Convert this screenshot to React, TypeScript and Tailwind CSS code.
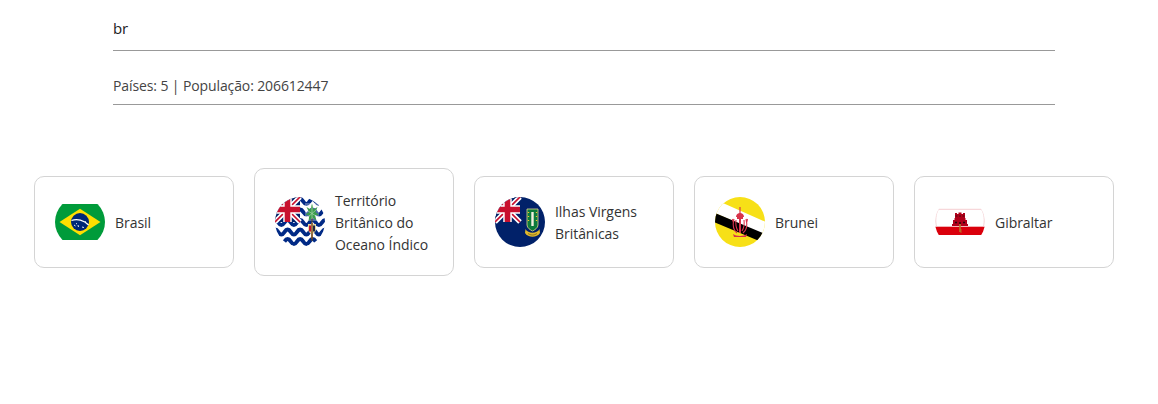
import React from "react";

function UnionJack() {
  return (
    <g>
      <rect x="0" y="0" width="25" height="25" fill="#012169" />
      <path d="M0 0L25 25M25 0L0 25" stroke="#fff" strokeWidth="5" />
      <path d="M0 0L25 25M25 0L0 25" stroke="#c8102e" strokeWidth="1.7" />
      <path d="M12.5 0V25M0 12.5H25" stroke="#fff" strokeWidth="8.5" />
      <path d="M12.5 0V25M0 12.5H25" stroke="#c8102e" strokeWidth="5.6" />
    </g>
  );
}

function Flag({ id, children }: { id: string; children: React.ReactNode }) {
  return (
    <svg width="50" height="50" viewBox="0 0 50 50" className="shrink-0 block">
      <defs>
        <clipPath id={id}>
          <circle cx="25" cy="25" r="25" />
        </clipPath>
      </defs>
      <g clipPath={`url(#${id})`}>{children}</g>
    </svg>
  );
}

const Brazil = () => (
  <Flag id="br">
    <rect x="0" y="7" width="50" height="36" fill="#009b3a" />
    <path d="M25 11.7L45.5 25L25 38.3L4.5 25Z" fill="#fedf00" />
    <circle cx="25" cy="25" r="9" fill="#002776" />
    <path d="M16.5 23.5C22 21.5 29 23 33.6 28" stroke="#fff" strokeWidth="1.3" fill="none" />
    <path d="M19 28l1.5 1M23 28l.5 2M27 30l2 .5M30 24.5l1 .5M21 26.5l1 .3" stroke="#dfe6f2" strokeWidth="1" />
  </Flag>
);

const wave = (y: number) => {
  let d = `M-3 ${y}`;
  for (let x = -3; x < 52; x += 12.5) {
    d += ` Q${x + 3.1} ${y - 5} ${x + 6.25} ${y} T${x + 12.5} ${y}`;
  }
  return d;
};

const Biot = () => (
  <Flag id="io">
    <rect width="50" height="50" fill="#fff" />
    {[4.5, 15, 25.5, 35, 44.5].map((y) => (
      <path key={y} d={wave(y)} stroke="#012a86" strokeWidth="4" fill="none" />
    ))}
    <UnionJack />
    <rect x="30" y="6" width="14" height="18" fill="#fff" opacity="0.3" />
    <path d="M37 14V44" stroke="#6b4a1e" strokeWidth="1" />
    <path d="M37 6.500L38.500 12.500L42.500 10L40.500 15L44 18L40 18L41.500 23.500L37.300 20.500L33.500 24L34.300 18.500L30.500 17.500L34 15L31.500 10L35.500 12.500Z" fill="#3a9c4c" />
    <path d="M37 9V22M33 14L41 19M41 13L33 20" stroke="#a6d6a8" strokeWidth="0.7" />
    <path d="M33 27H41V32C41 35 38.500 36.500 37 37.500C35.500 36.500 33 35 33 32Z" fill="#e8d9a0" />
    <rect x="34" y="28.500" width="2" height="6" fill="#c8102e" />
    <rect x="38" y="28.500" width="2" height="6" fill="#1d2a44" />
    <rect x="36.300" y="26" width="1.400" height="16" fill="#7a4a1e" />
  </Flag>
);

const Bvi = () => (
  <Flag id="vg">
    <rect width="50" height="50" fill="#012169" />
    <UnionJack />
    <path d="M32 12H43V28C43 31 39.500 33 37.500 34C35.500 33 32 31 32 28Z" fill="#0c7a3b" stroke="#e5d48a" strokeWidth="0.8" />
    <rect x="36.300" y="15" width="2.400" height="14" fill="#f4efe0" />
    <path d="M33.500 15v1M33.500 19v1M33.500 23v1M41.500 15v1M41.500 19v1M41.500 23v1" stroke="#f2c230" strokeWidth="1.300" />
    <path d="M30.500 32C33 37 42 37 44.500 32L45 36C42 41 33 41 30 36Z" fill="#e2b92c" />
    <path d="M33 36.500C36 38.500 39 38.500 42 36.500" stroke="#7a6420" strokeWidth="0.8" fill="none" />
  </Flag>
);

const Brunei = () => (
  <Flag id="bn">
    <rect width="50" height="50" fill="#f7e017" />
    <path d="M0 2.600L50 24.600V38L0 16Z" fill="#fff" />
    <path d="M0 16L50 37V46.500L0 25.500Z" fill="#000" />
    <path d="M25 10V17" stroke="#d8324a" strokeWidth="1.200" />
    <path d="M21 20C21 17.500 23 16 25 16C27 16 29 17.500 29 20Z" fill="#d8324a" />
    <rect x="22" y="20" width="6" height="2" fill="#d8324a" />
    <path d="M24 22V36H26V22Z" fill="#d8324a" />
    <path d="M19 22C17.500 28 18 33 22 36M31 22C32.500 28 32 33 28 36M21 23C20.500 27 21 31 23 34M29 23C29.500 27 29 31 27 34M17.500 22L18.500 26M32.500 22L31.500 26" stroke="#d8324a" strokeWidth="1.100" fill="none" />
    <path d="M18 37C21 39.500 29 39.500 32 37L31 40H19Z" fill="#d8324a" />
  </Flag>
);

const Gibraltar = () => (
  <Flag id="gi">
    <rect x="0" y="12" width="50" height="17.700" fill="#fff" />
    <rect x="0" y="29.700" width="50" height="8.300" fill="#da000c" />
    <path d="M3.600 12.300H46.400" stroke="#f0b8bd" strokeWidth="0.700" />
    <path d="M3.400 12.500C0.500 17 0.200 24 1.500 29.700M46.600 12.500C49.500 17 49.800 24 48.500 29.700" stroke="#f0c4c8" strokeWidth="0.800" fill="none" />
    <path d="M18 27V23H19.500V21H20V16H22V17H23.500V15.500H26.500V17H28V16H30V21H30.500V23H32V27H33V29H17V27Z" fill="#b0001a" />
    <path d="M20.500 19h2M24 19h2M27.500 19h2" stroke="#4a0a10" strokeWidth="1" />
    <path d="M20 25.500h2M24 26h2M28 25.500h2" stroke="#2a0508" strokeWidth="1.500" />
    <path d="M25 27V35" stroke="#b5792a" strokeWidth="1.600" />
    <path d="M25 33h2M25 35h2" stroke="#b5792a" strokeWidth="0.800" />
  </Flag>
);

const countries = [
  { name: "Brasil", flag: <Brazil /> },
  { name: "Território Britânico do Oceano Índico", flag: <Biot /> },
  { name: "Ilhas Virgens Britânicas", flag: <Bvi /> },
  { name: "Brunei", flag: <Brunei /> },
  { name: "Gibraltar", flag: <Gibraltar /> },
];

export default function App() {
  return (
    <div className="w-[1158px] h-[404px] bg-white overflow-hidden text-[#333] font-['Open_Sans','Noto_Sans',sans-serif] text-[14px] leading-[22px] tracking-[-0.11px]">
      <div className="ml-[113px] w-[942px] pt-[8px]">
        <input
          readOnly
          value="br"
          className="block w-full h-[43px] pb-[2px] border-b border-[#999] outline-none text-[15px] text-[#222] bg-transparent"
        />
        <div className="mt-[24px] h-[30px] border-b border-[#999] text-[#444]">Países: 5 | População: 206612447</div>
      </div>
      <div className="ml-[34px] mt-[63px] flex items-center gap-[20px]">
        {countries.map((c) => (
          <div key={c.name} className="w-[200px] flex items-center gap-[10px] p-[20px] border border-[#d4d4d4] rounded-[10px] bg-white">
            {c.flag}
            <span className="translate-y-[1px] tracking-[-0.04px]">{c.name}</span>
          </div>
        ))}
      </div>
    </div>
  );
}
